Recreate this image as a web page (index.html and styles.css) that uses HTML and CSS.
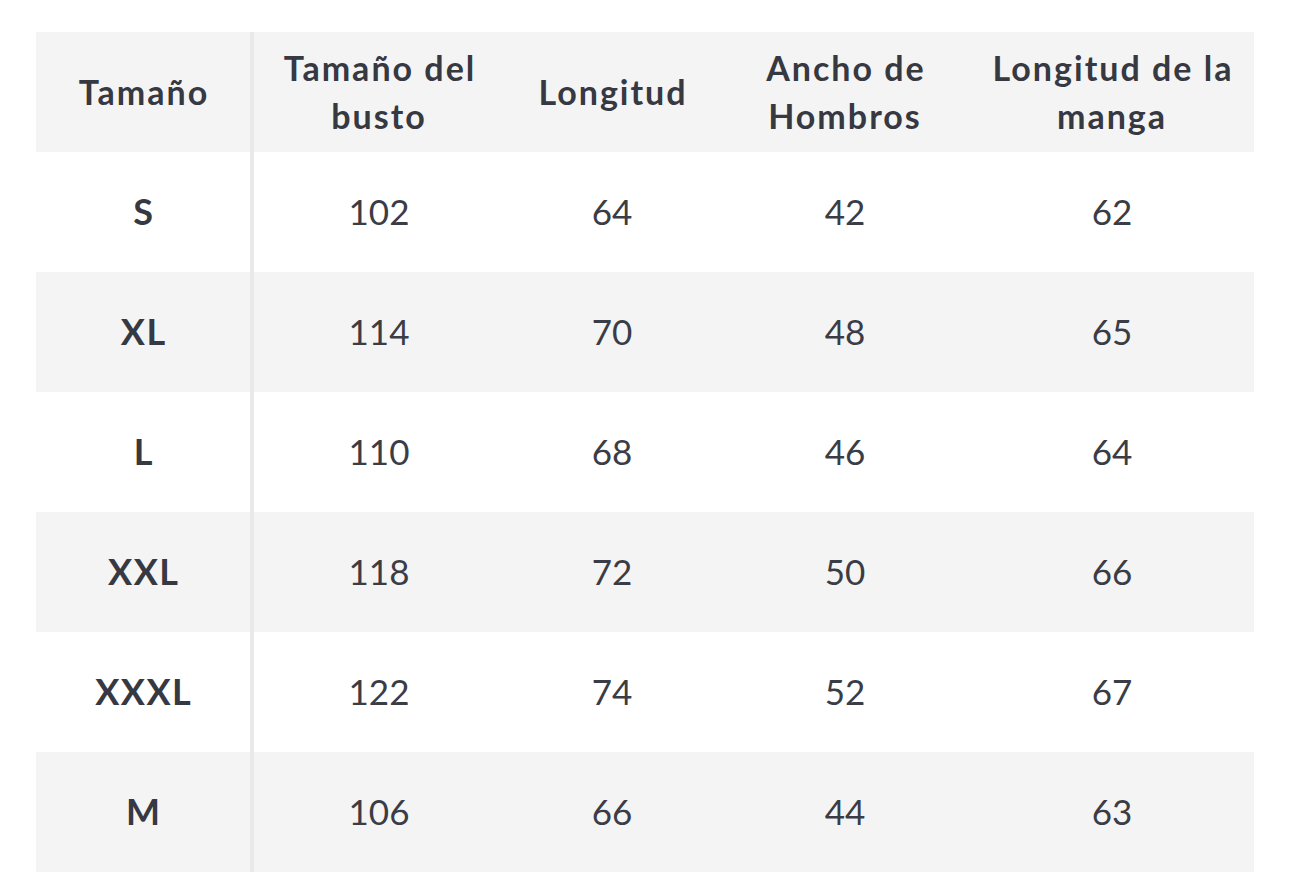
FILE: index.html
```html
<!DOCTYPE html>
<html lang="es">
<head>
<meta charset="utf-8">
<link rel="stylesheet" href="styles.css">
</head>
<body>
<div class="wrap">
<table class="sizes">
<colgroup>
<col class="c1"><col class="c2"><col class="c3"><col class="c4"><col class="c5">
</colgroup>
<thead>
<tr><th>Tamaño</th><th>Tamaño del<br>busto</th><th>Longitud</th><th>Ancho de<br>Hombros</th><th>Longitud de la<br>manga</th></tr>
</thead>
<tbody>
<tr><th>S</th><td>102</td><td>64</td><td>42</td><td>62</td></tr>
<tr><th>XL</th><td>114</td><td>70</td><td>48</td><td>65</td></tr>
<tr><th>L</th><td>110</td><td>68</td><td>46</td><td>64</td></tr>
<tr><th>XXL</th><td>118</td><td>72</td><td>50</td><td>66</td></tr>
<tr><th>XXXL</th><td>122</td><td>74</td><td>52</td><td>67</td></tr>
<tr><th>M</th><td>106</td><td>66</td><td>44</td><td>63</td></tr>
</tbody>
</table>
</div>
</body>
</html>
```
FILE: styles.css
```css
html, body { margin: 0; padding: 0; background: #fff; }
.wrap { padding: 32px 36px 0 36px; }
.sizes {
  width: 1218px;
  border-collapse: collapse;
  table-layout: fixed;
  font-family: Lato, "Noto Sans", sans-serif;
  color: #363842;
}
.c1 { width: 216px; }
.c2 { width: 252px; }
.c3 { width: 216px; }
.c4 { width: 250px; }
.c5 { width: 284px; }
.sizes th, .sizes td {
  padding: 0;
  text-align: center;
  vertical-align: middle;
  line-height: 48px;
}
.sizes thead th {
  height: 119px;
  font-size: 34px;
  font-weight: 700;
  letter-spacing: 2px;
  text-indent: 2px;
  padding-bottom: 1px;
}
.sizes tbody th {
  height: 117px;
  font-size: 36px;
  font-weight: 700;
  letter-spacing: 1.5px;
  text-indent: 1.5px;
  padding-bottom: 3px;
}
.sizes td {
  height: 117px;
  font-size: 35px;
  font-weight: 400;
  color: #3a3c46;
  padding-bottom: 3px;
}
.sizes tr > :first-child { border-right: 4px solid #e9e9e9; }
.sizes thead tr, .sizes tbody tr:nth-child(even) { background: #f4f4f4; }
```
